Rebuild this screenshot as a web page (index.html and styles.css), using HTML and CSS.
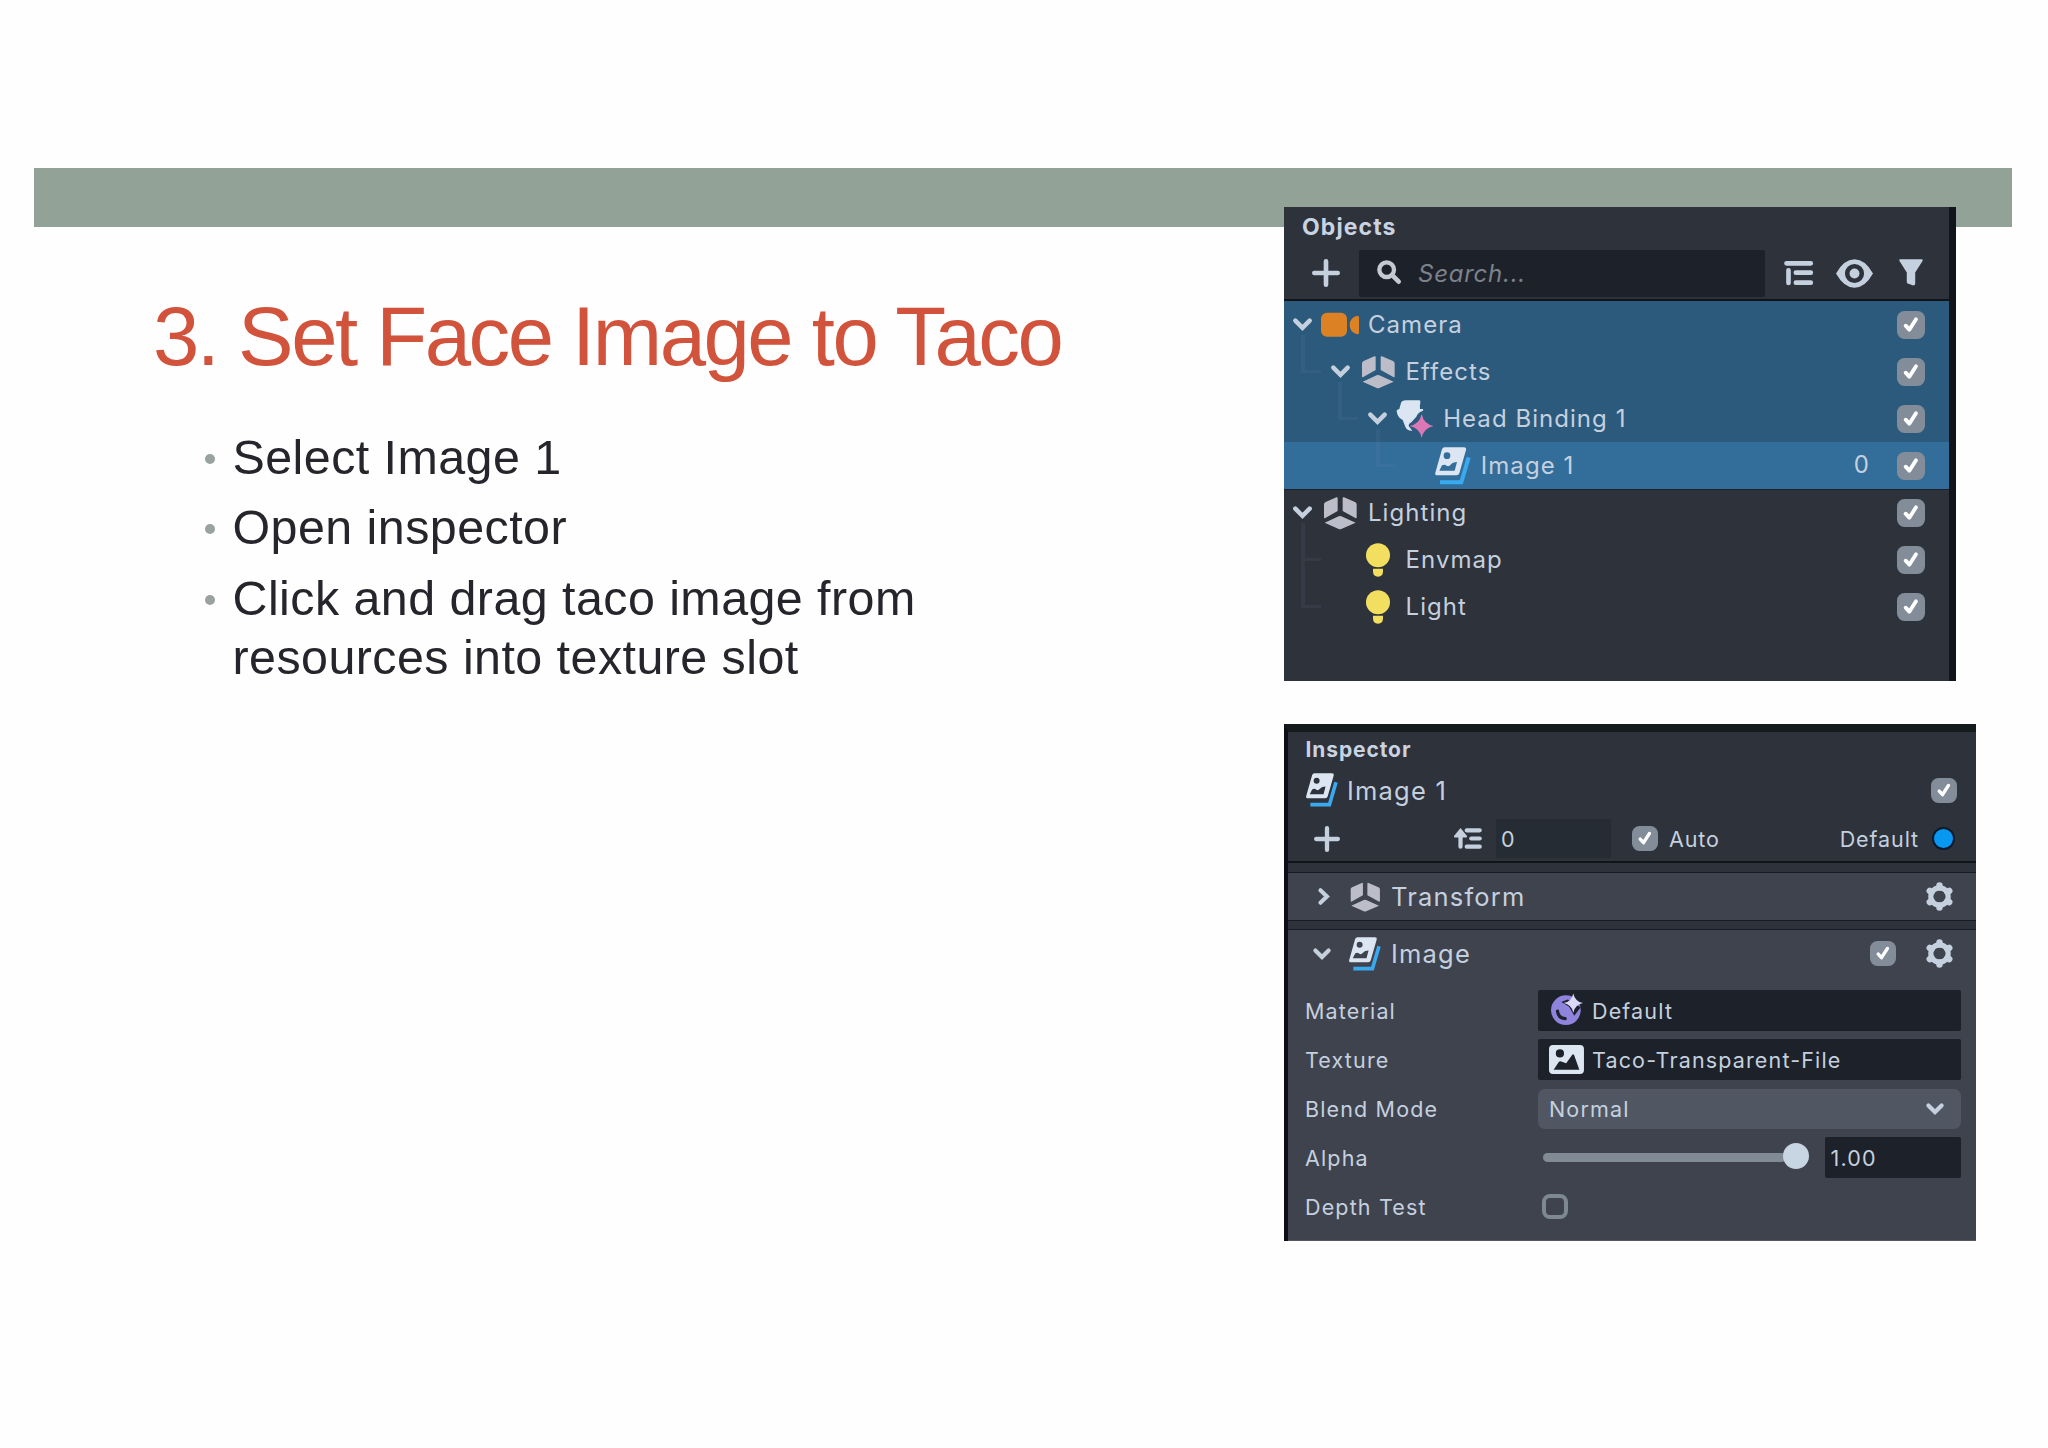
FILE: index.html
```html
<!DOCTYPE html>
<html lang="en">
<head>
    <meta charset="UTF-8">
    <meta name="viewport" content="width=device-width, initial-scale=1.0">
    <title>Set Face Image to Taco</title>
    <link rel="stylesheet" href="styles.css">
</head>
<body>
    <!-- icon sprite -->
    <svg class="sprite" width="0" height="0">
        <symbol id="plus" viewBox="0 0 84 84"><path d="M42 7v70M7 42h70" fill="none" stroke="currentColor" stroke-width="14" stroke-linecap="round"/></symbol>
        <symbol id="search" viewBox="0 0 72 72"><g fill="none" stroke="currentColor" stroke-linecap="round"><circle cx="29" cy="29" r="22" stroke-width="13"/><path d="M47 47l18 18" stroke-width="14"/></g></symbol>
        <symbol id="down" viewBox="0 0 57 39"><path d="M7 8l21.500 21.500L50 8" fill="none" stroke="currentColor" stroke-width="13.500" stroke-linecap="round"/></symbol>
        <symbol id="right" viewBox="0 0 36 52"><path d="M7 7l20 19L7 45" fill="none" stroke="currentColor" stroke-width="12.500" stroke-linecap="round"/></symbol>
        <symbol id="list" viewBox="0 0 86 84"><path d="M7 13h73M13 34v38M35 41h45M35 71h45" fill="none" stroke="currentColor" stroke-width="14" stroke-linecap="round"/></symbol>
        <symbol id="eye" viewBox="0 0 112 86"><path fill="currentColor" fill-rule="evenodd" d="M0 43Q24 0 56 0t56 43Q88 86 56 86T0 43zM56 14a29 29 0 1 0 0 58a29 29 0 1 0 0-58z"/><circle cx="56" cy="43" r="15" fill="currentColor"/></symbol>
        <symbol id="filter" viewBox="0 0 74 82"><path fill="currentColor" d="M4 0h66q5 0 3 5L50 41v35q0 5-6 5l-15-5q-5-2-5-6V41L1 5Q-1 0 4 0z"/></symbol>
        <symbol id="check" viewBox="0 0 84 84"><path d="M26 44l11 12 20-31" fill="none" stroke="#fff" stroke-width="11.500" stroke-linecap="round" stroke-linejoin="round"/></symbol>
        <symbol id="camera" viewBox="0 0 114 120"><rect y="23" width="78" height="72" rx="18" fill="#dd8224"/><path d="M109 32q5 0 5 5v46q0 5-5 5Q86 82 86 60t23-28z" fill="#dd8224"/></symbol>
        <symbol id="cube" viewBox="0 0 114 120"><path fill="#bcbdc9" d="M14 27l32-14q4-2 4 3v38L13 75q-4 2-4-3V34q0-5 5-7zM69 13l33 14q5 2 5 7v38q0 5-4 3L65 54V16q0-5 4-3zM11 89l42-19q4-2 8 0l43 19-43 19q-4 2-8 0z"/></symbol>
        <symbol id="head" viewBox="0 0 114 120"><path fill="#dce6f2" d="M15 12Q17 4 30 4h40q4 0 3 6-2 10-1 20h9q3 4-3 7-12 4-17 16L46 70q-14 8-4 16l7 9q-16 1-21-12l-8-20Q9 58 5 48 0 34 4 32l6-2q2-8 5-18z"/><path fill="#dc78b6" d="M77 45q6 30 36 36-30 6-36 36-6-30-36-36 30-6 36-36z"/></symbol>
        <symbol id="image" viewBox="0 0 114 120"><path d="M104 34L82 109H18" fill="none" stroke="#39aaf0" stroke-width="12"/><path fill="#dce6f2" fill-rule="evenodd" d="M32 4h58q8 0 6 8L76 82q-2 6-8 6H10q-8 0-6-8L24 10q2-6 8-6zM39 19a10 10 0 1 0 0 20a10 10 0 1 0 0-20zM16 74l8-16q8-4 14 1 6 4 12-3 6-8 19-8l-7 26z"/></symbol>
        <symbol id="bulb" viewBox="0 0 114 120"><circle cx="57" cy="46" r="36" fill="#f2df60"/><path fill="#f2df60" d="M42 86h30v8q0 16-15 16T42 94z"/></symbol>
        <symbol id="sort" viewBox="0 0 86 64"><path d="M20 20v37M39 7h40M53 32h26M39 57h40" fill="none" stroke="currentColor" stroke-width="13" stroke-linecap="round"/><path fill="currentColor" d="M20 0l20 24q2 5-4 5H4q-6 0-4-5z"/></symbol>
        <symbol id="gear" viewBox="0 0 90 90"><g fill="none" stroke="currentColor"><circle cx="45" cy="45" r="27" stroke-width="16"/><path d="M45 17v-6M45 73v6M69.200 31l6.100-3.500M69.200 59l6.100 3.500M20.800 31l-6.100-3.500M20.800 59l-6.100 3.500" stroke-width="20" stroke-linecap="round"/></g></symbol>
        <symbol id="material" viewBox="0 0 105 96"><circle cx="49" cy="47" r="46" fill="#8f83de"/><path d="M23 50q2 21 24 23" fill="none" stroke="#1c212a" stroke-width="10" stroke-linecap="round"/><path d="M35 22l20-8 40 24-20 26-16-28z" fill="#1c212a"/><path d="M72-5q5 25 30 30-25 5-30 30-5-25-30-30 25-5 30-30z" fill="#dcd8f8"/></symbol>
        <symbol id="texture" viewBox="0 0 106 88"><path fill="#dce6f2" fill-rule="evenodd" d="M12 0h82q12 0 12 12v64q0 12-12 12H12Q0 88 0 76V12Q0 0 12 0zM33 13a12.500 12.500 0 1 0 0 25a12.500 12.500 0 1 0 0-25zM14 75l16-24q3-3 7-1l15 5 18-25q3-4 6 0l16 45z"/></symbol>
    </svg>

    <div class="banner"></div>

    <main class="slide">
        <section class="text">
            <h1>3. Set Face Image to Taco</h1>
            <ul>
                <li>Select Image 1</li>
                <li>Open inspector</li>
                <li>Click and drag taco image from<br>resources into texture slot</li>
            </ul>
        </section>

        <div class="panels">
            <!-- objects panel -->
            <section class="objects">
                <h2>Objects</h2>
                <div class="toolbar">
                    <svg class="icon-plus"><use href="#plus"/></svg>
                    <div class="search"><svg class="icon-search"><use href="#search"/></svg><span>Search...</span></div>
                    <svg class="icon-list"><use href="#list"/></svg>
                    <svg class="icon-eye"><use href="#eye"/></svg>
                    <svg class="icon-filter"><use href="#filter"/></svg>
                </div>
                <div class="tree">
                    <div class="row selected">
                        <svg class="arrow"><use href="#down"/></svg><svg class="icon"><use href="#camera"/></svg>
                        <span class="label">Camera</span><svg class="check"><use href="#check"/></svg>
                    </div>
                    <div class="row selected level1">
                        <i class="branch"></i>
                        <svg class="arrow"><use href="#down"/></svg><svg class="icon"><use href="#cube"/></svg>
                        <span class="label">Effects</span><svg class="check"><use href="#check"/></svg>
                    </div>
                    <div class="row selected level2">
                        <i class="branch"></i>
                        <svg class="arrow"><use href="#down"/></svg><svg class="icon"><use href="#head"/></svg>
                        <span class="label">Head Binding 1</span><svg class="check"><use href="#check"/></svg>
                    </div>
                    <div class="row current level3">
                        <i class="branch"></i>
                        <span class="arrow"></span><svg class="icon"><use href="#image"/></svg>
                        <span class="label">Image 1</span><span class="order">0</span><svg class="check"><use href="#check"/></svg>
                    </div>
                    <div class="row">
                        <svg class="arrow"><use href="#down"/></svg><svg class="icon"><use href="#cube"/></svg>
                        <span class="label">Lighting</span><svg class="check"><use href="#check"/></svg>
                    </div>
                    <div class="row level1">
                        <i class="branch"></i>
                        <span class="arrow"></span><svg class="icon"><use href="#bulb"/></svg>
                        <span class="label">Envmap</span><svg class="check"><use href="#check"/></svg>
                    </div>
                    <div class="row level1">
                        <i class="branch long"></i>
                        <span class="arrow"></span><svg class="icon"><use href="#bulb"/></svg>
                        <span class="label">Light</span><svg class="check"><use href="#check"/></svg>
                    </div>
                </div>
            </section>

            <!-- inspector panel -->
            <section class="inspector">
                <header class="inspector-head">
                    <h2>Inspector</h2>
                    <div class="object-name">
                        <svg class="icon"><use href="#image"/></svg>
                        <span class="name">Image 1</span>
                        <svg class="check"><use href="#check"/></svg>
                    </div>
                    <div class="options">
                        <svg class="icon-plus"><use href="#plus"/></svg>
                        <svg class="icon-sort"><use href="#sort"/></svg>
                        <span class="order-input">0</span>
                        <svg class="check"><use href="#check"/></svg>
                        <span class="auto">Auto</span>
                        <span class="layer">Default</span>
                        <i class="dot"></i>
                    </div>
                </header>
                <div class="component">
                    <div class="component-head">
                        <span class="toggle"><svg class="arrow-right"><use href="#right"/></svg></span>
                        <svg class="icon"><use href="#cube"/></svg>
                        <span class="name">Transform</span>
                        <svg class="gear"><use href="#gear"/></svg>
                    </div>
                </div>
                <div class="component opened">
                    <div class="component-head">
                        <span class="toggle"><svg class="arrow-down"><use href="#down"/></svg></span>
                        <svg class="icon"><use href="#image"/></svg>
                        <span class="name">Image</span>
                        <svg class="check"><use href="#check"/></svg>
                        <svg class="gear"><use href="#gear"/></svg>
                    </div>
                    <div class="field"><span class="field-name">Material</span>
                        <div class="input"><svg class="icon-material"><use href="#material"/></svg><span>Default</span></div>
                    </div>
                    <div class="field"><span class="field-name">Texture</span>
                        <div class="input"><svg class="icon-texture"><use href="#texture"/></svg><span>Taco-Transparent-File</span></div>
                    </div>
                    <div class="field"><span class="field-name">Blend Mode</span>
                        <div class="select"><span>Normal</span><svg class="arrow-down"><use href="#down"/></svg></div>
                    </div>
                    <div class="field"><span class="field-name">Alpha</span>
                        <div class="slider"><i class="track"></i><i class="knob"></i></div>
                        <div class="number">1.00</div>
                    </div>
                    <div class="field"><span class="field-name">Depth Test</span>
                        <i class="unchecked"></i>
                    </div>
                </div>
            </section>
        </div>
    </main>
</body>
</html>
```
FILE: styles.css
```css
* {
    margin: 0;
    padding: 0;
    box-sizing: border-box;
}
body {
    background: #fefefe;
    font-family: Inter, "Liberation Sans", sans-serif;
    color: #c5d0df;
    overflow: hidden;
}
svg {
    flex: none;
    display: block;
    overflow: visible;
}
symbol {
    overflow: visible;
}
.sprite {
    position: absolute;
}
.banner {
    height: 59.5px;
    margin: 167.5px 36px 0 34px;
    background: #92a296;
}
.slide {
    display: flex;
    justify-content: space-between;
    margin-top: -20.500px;
    padding: 0 72px 0 153px;
    position: relative;
}

/* left text */
.text {
    font-family: "Liberation Sans", Arial, sans-serif;
    padding-top: 82px;
}
h1 {
    font-size: 83.3px;
    font-weight: normal;
    line-height: 96px;
    letter-spacing: -2.5px;
    color: #d1533c;
    white-space: nowrap;
}
ul {
    list-style: none;
    margin-top: 43px;
    padding-left: 52px;
}
li {
    display: flex;
    font-size: 48.4px;
    line-height: 58.4px;
    letter-spacing: 0.45px;
    color: #26252b;
    margin-bottom: 12.4px;
    white-space: nowrap;
}
li::before {
    content: '';
    width: 10px;
    height: 10px;
    margin: 26px 17.500px 0 0;
    border-radius: 50%;
    background: #98a39f;
}

/* objects panel */
.panels {
    width: 692px;
}
.objects {
    width: 672px;
    height: 474px;
    background: #2d323b;
    border-right: 7px solid #11151b;
}
h2 {
    font-weight: 700;
    color: #c9d3e1;
}
.objects h2 {
    font-size: 23px;
    line-height: 30px;
    padding: 5px 0 0 18px;
    height: 43px;
    letter-spacing: 1.1px;
}
.toolbar {
    display: flex;
    align-items: center;
    height: 47px;
    padding: 0 26px 0 28px;
}
.icon-plus {
    width: 28px;
    height: 28px;
}
.search {
    display: flex;
    align-items: center;
    width: 406px;
    height: 47px;
    margin: 0 19px;
    padding-left: 18px;
    background: #1c212a;
    border-radius: 2px;
    font-size: 24px;
    font-style: italic;
    letter-spacing: 0.75px;
    color: #7c828a;
}
.icon-search {
    width: 24px;
    height: 24px;
    margin: 0 17px 3px 0;
    color: #c5cad2;
}
.icon-list {
    width: 29px;
    height: 28px;
}
.icon-eye {
    width: 37px;
    height: 29px;
    margin-left: 23px;
}
.icon-filter {
    width: 24px;
    height: 27px;
    margin: 0 0 2px 26px;
}
.tree {
    margin-top: 2px;
    border-top: 2px solid #11151a;
}
.row {
    position: relative;
    display: flex;
    align-items: center;
    height: 47px;
    padding: 1px 24px 0 9px;
    font-size: 24px;
}
.level1 {
    padding-left: 46.600px;
}
.level2 {
    padding-left: 84.200px;
}
.level3 {
    padding-left: 121.800px;
}
.selected {
    background: #2c5a7d;
}
.current {
    background: #336e9a;
    box-shadow: 0 1px 0 #1b2029;
}
.row .arrow {
    width: 19px;
    height: 13px;
}
.row .icon {
    width: 38px;
    height: 40px;
    margin: 0 9px;
}
.label {
    flex: 1;
    letter-spacing: 1.05px;
}
.order {
    margin: -3px 28px 0 0;
}
/* guide line from the parent arrow */
.branch {
    position: absolute;
    top: -13px;
    width: 20px;
    height: 38px;
    margin-left: -30px;
    border-left: 4px solid rgba(120, 150, 175, 0.1);
    border-bottom: 3px solid rgba(120, 150, 175, 0.1);
}
.branch.long {
    top: -22px;
    height: 47px;
}
.check {
    width: 28px;
    height: 28px;
    border-radius: 7.5px;
    background: #828d99;
}

/* inspector panel */
.inspector {
    height: 517px;
    margin-top: 43.500px;
    border-top: 8px solid #151a1d;
    border-left: 4px solid #0c1015;
    background: #2d323b;
    font-size: 21.5px;
}
.inspector .check {
    width: 26px;
    height: 25px;
}
.inspector-head {
    height: 131px;
    border-bottom: 2px solid #10141b;
}
.inspector h2 {
    font-size: 21px;
    line-height: 26px;
    height: 38px;
    padding: 5px 0 0 17.500px;
    letter-spacing: 0.9px;
}
.object-name {
    display: flex;
    align-items: center;
    height: 40px;
    padding: 0 19px 0 17px;
}
.inspector .icon {
    width: 34px;
    height: 36px;
}
.name {
    flex: 1;
    font-size: 25.500px;
    letter-spacing: 1.2px;
}
.object-name .name {
    margin-left: 8px;
}
.options {
    display: flex;
    align-items: center;
    height: 57px;
    padding: 0 21px 0 25.500px;
    letter-spacing: 0.9px;
}
.options .icon-plus {
    width: 26px;
    height: 26px;
}
.icon-sort {
    width: 28px;
    height: 21px;
    margin-left: 114.500px;
}
.order-input {
    width: 115px;
    height: 39px;
    margin: 0 21px 0 14px;
    padding-left: 5px;
    line-height: 41px;
    background: #262c34;
}
.auto {
    flex: 1;
    margin-left: 11px;
}
.dot {
    width: 23px;
    height: 23px;
    margin-left: 13px;
    border: 2px solid #0b1a2c;
    border-radius: 50%;
    background: #0898f2;
}
.component {
    height: 49px;
    margin-top: 9px;
    border-top: 1px solid #171b23;
    border-bottom: 1px solid #171b23;
    background: #3f434e;
}
.component.opened {
    height: 312px;
    margin-top: 8px;
    border-bottom-color: #55585f;
}
.component-head {
    display: flex;
    align-items: center;
    height: 47px;
    padding: 0 22px 0 25px;
}
.toggle {
    width: 20px;
    margin-right: 15px;
}
.arrow-right {
    width: 12px;
    height: 17px;
    margin-left: 4.500px;
}
.arrow-down {
    width: 18px;
    height: 12px;
}
.component-head .name {
    margin-left: 9px;
}
.gear {
    width: 29px;
    height: 29px;
}
.component-head .check {
    margin-right: 29px;
}
.opened .component-head {
    margin-bottom: 9px;
}
.field {
    display: flex;
    align-items: center;
    height: 49px;
    padding: 0 15px 0 17px;
    letter-spacing: 1.15px;
}
.field-name {
    width: 233px;
}
.input,
.select {
    flex: 1;
    display: flex;
    align-items: center;
    height: 41px;
    background: #1c212a;
    border-radius: 2px;
}
.icon-material {
    width: 34px;
    height: 31px;
    margin: 0 8px 1px 12px;
}
.icon-texture {
    width: 35px;
    height: 29px;
    margin: 0 8px 0 11px;
}
.select {
    justify-content: space-between;
    height: 40px;
    padding: 0 17px 0 11px;
    border-radius: 7px;
    background: #505762;
}
.slider {
    display: flex;
    align-items: center;
    width: 267px;
    margin: 0 15px 0 4.500px;
    padding-bottom: 3px;
}
.track {
    width: 243px;
    height: 9px;
    margin: 3px -2px 0 0;
    border-radius: 5px;
    background: #808b96;
}
.knob {
    width: 26px;
    height: 26px;
    margin-left: -0.5px;
    border-radius: 50%;
    background: #c8d5e3;
}
.number {
    flex: 1;
    height: 41px;
    padding-left: 6px;
    line-height: 43px;
    background: #1c212a;
    border-radius: 2px;
}
.unchecked {
    width: 26px;
    height: 25px;
    margin: 0 0 1px 4px;
    border: 4px solid #7d8893;
    border-radius: 8px;
}
```
